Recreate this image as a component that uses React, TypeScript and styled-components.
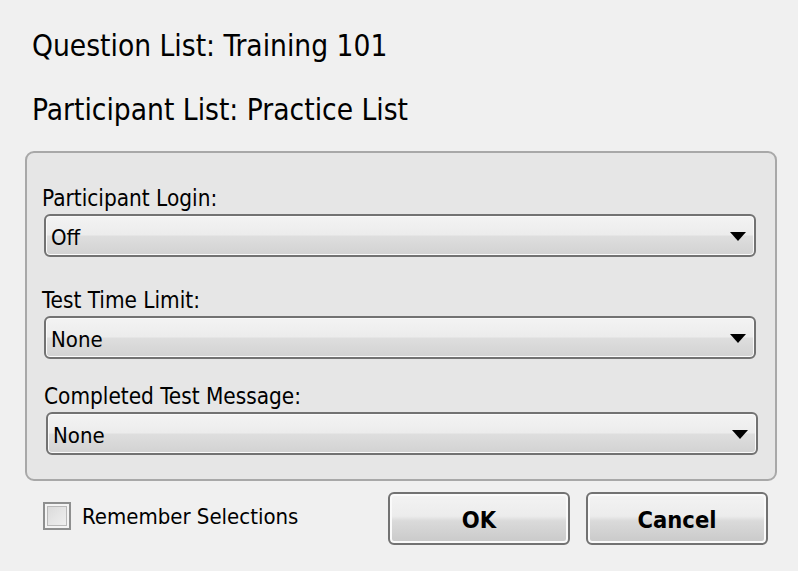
import React from "react";
import styled, { createGlobalStyle } from "styled-components";

const Global = createGlobalStyle`
  html, body { margin: 0; padding: 0; background: #f0f0f0; }
  body { width: 798px; height: 571px; overflow: hidden; font-family: "DejaVu Sans Condensed", "DejaVu Sans", sans-serif; color: #000; }
`;

const Dialog = styled.div`
  width: 798px;
  height: 571px;
  box-sizing: border-box;
  padding: 28px 30px 0 25px;
  display: flex;
  flex-direction: column;
`;

const Title = styled.div`
  font-size: 29.6px;
  line-height: 36px;
  padding-left: 7px;
  margin-bottom: 28px;
  white-space: nowrap;
`;

const GroupBox = styled.div`
  margin-top: -5px;
  width: 752px;
  height: 330px;
  box-sizing: border-box;
  border: 2px solid #a8a8a8;
  border-radius: 9px;
  background: #e6e6e6;
  padding: 32px 17px 0 15px;
  display: flex;
  flex-direction: column;
`;

const Field = styled.div<{ $shift: number; $gap: number }>`
  display: flex;
  flex-direction: column;
  margin-left: ${(p) => p.$shift}px;
  margin-bottom: ${(p) => p.$gap}px;
`;

const Label = styled.div`
  font-size: 22.4px;
  line-height: 26px;
  margin-bottom: 3px;
  white-space: nowrap;
`;

const Select = styled.div`
  width: 712px;
  height: 43px;
  margin-left: 2px;
  box-sizing: border-box;
  border: 2px solid #727272;
  border-radius: 6px;
  box-shadow: inset 0 0 0 1px #fafafa;
  background: linear-gradient(to bottom, #f3f3f3 0%, #ececec 48%, #dedede 52%, #d2d2d2 100%);
  display: flex;
  align-items: center;
  padding: 3px 8px 0 5px;
  font-size: 22px;
`;

const Value = styled.span`
  flex: 1;
`;

const Arrow = styled.svg`
  width: 16px;
  height: 9px;
  margin-top: -2px;
`;

const Footer = styled.div`
  display: flex;
  align-items: center;
  margin-top: 11px;
  height: 53px;
`;

const CheckRow = styled.label`
  display: flex;
  align-items: center;
  margin-left: 18px;
  margin-top: -5px;
  flex: 1;
  font-size: 22px;
  gap: 11px;
`;

const Box = styled.span`
  width: 28px;
  height: 28px;
  box-sizing: border-box;
  border: 2px solid #8e8f8f;
  box-shadow: inset 0 0 0 2px #f4f4f4, inset 0 0 0 3px #b9b9b9;
  background: linear-gradient(135deg, #d8d8d8 0%, #f2f2f2 100%);
`;

const Button = styled.button<{ $gapLeft: number }>`
  width: 182px;
  height: 53px;
  margin-left: ${(p) => p.$gapLeft}px;
  box-sizing: border-box;
  border: 2px solid #727272;
  border-radius: 6px;
  box-shadow: inset 0 0 0 2px #fafafa;
  background: linear-gradient(to bottom, #f3f3f3 0%, #ececec 45%, #dadada 55%, #c9c9c9 100%);
  font-family: "DejaVu Sans Condensed", "DejaVu Sans", sans-serif;
  font-weight: bold;
  font-size: 23.5px;
  color: #000;
  padding: 2px 0 0 0;
  display: flex;
  align-items: center;
  justify-content: center;
`;

const DropArrow = () => (
  <Arrow viewBox="0 0 16 9">
    <polygon points="0,0 16,0 8,9" fill="#000" />
  </Arrow>
);

const fields = [
  { label: "Participant Login:", value: "Off", shift: 0, gap: 30 },
  { label: "Test Time Limit:", value: "None", shift: 0, gap: 24 },
  { label: "Completed Test Message:", value: "None", shift: 2, gap: 0 },
];

export default function App() {
  return (
    <>
      <Global />
      <Dialog>
        <Title>Question List: Training 101</Title>
        <Title>Participant List: Practice List</Title>
        <GroupBox>
          {fields.map((f) => (
            <Field key={f.label} $shift={f.shift} $gap={f.gap}>
              <Label>{f.label}</Label>
              <Select>
                <Value>{f.value}</Value>
                <DropArrow />
              </Select>
            </Field>
          ))}
        </GroupBox>
        <Footer>
          <CheckRow>
            <Box />
            <span>Remember Selections</span>
          </CheckRow>
          <Button $gapLeft={0}>OK</Button>
          <Button $gapLeft={16}>Cancel</Button>
        </Footer>
      </Dialog>
    </>
  );
}
